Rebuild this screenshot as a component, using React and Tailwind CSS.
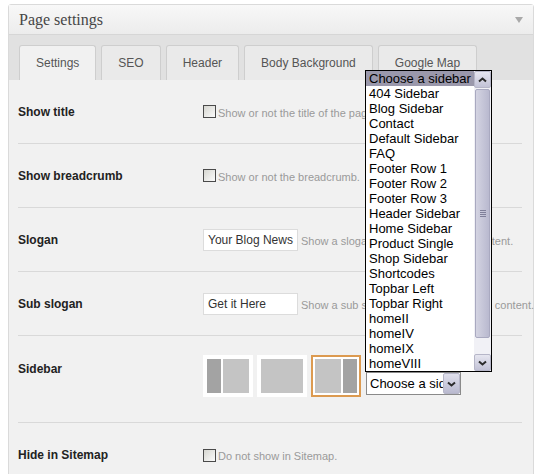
import React from 'react';

const sidebars = [
  'Choose a sidebar', '404 Sidebar', 'Blog Sidebar', 'Contact', 'Default Sidebar', 'FAQ',
  'Footer Row 1', 'Footer Row 2', 'Footer Row 3', 'Header Sidebar', 'Home Sidebar',
  'Product Single', 'Shop Sidebar', 'Shortcodes', 'Topbar Left', 'Topbar Right',
  'homeII', 'homeIV', 'homeIX', 'homeVIII',
];

const tabs = ['Settings', 'SEO', 'Header', 'Body Background', 'Google Map'];

function Chevron({ down }) {
  return (
    <svg width="9" height="6" viewBox="0 0 9 6">
      <path d={down ? 'M1 1.5 L4.5 4.5 L8 1.5' : 'M1 4.5 L4.5 1.5 L8 4.5'} fill="none" stroke="#2b2b2b" strokeWidth="2" />
    </svg>
  );
}

function ScrollButton({ down }) {
  return (
    <div className="h-[17px] w-full flex items-center justify-center rounded-[2px] border border-[#b6b6c8] bg-gradient-to-b from-[#e6e6f0] to-[#c2c2d6]">
      <Chevron down={down} />
    </div>
  );
}

function Checkbox() {
  return <div className="w-[13px] h-[13px] shrink-0 border border-[#4a4a4a] bg-gradient-to-br from-[#d6d6d0] to-[#fbfbfb]" />;
}

function Row({ label, children, last }) {
  return (
    <div className={`flex items-center h-[64px] ${last ? '' : 'border-b border-[#d9d9d9]'}`}>
      <div className="w-[185px] shrink-0 text-[12px] font-bold text-[#222]">{label}</div>
      <div className="flex items-center">{children}</div>
    </div>
  );
}

function Desc({ children }) {
  return <span className="text-[11px] text-[#9a9a9a] whitespace-nowrap">{children}</span>;
}

function TextInput({ value }) {
  return (
    <div className="w-[95px] h-[22px] shrink-0 border border-[#dcdcdc] bg-white px-[4px] flex items-center text-[12px] text-[#333] whitespace-nowrap overflow-hidden">
      {value}
    </div>
  );
}

function SidebarSelect() {
  return (
    <div className="relative ml-[1px] mb-[2px]">
      <div className="absolute bottom-full left-[-1px] z-10 w-[127px] h-[302px] border border-black bg-white flex">
        <ul className="flex-1 overflow-hidden text-[13px] leading-[15px] text-black">
          {sidebars.map((s, i) => (
            <li key={s} className={`pl-[3px] whitespace-nowrap ${i === 0 ? 'bg-[#9a98ab]' : ''}`}>{s}</li>
          ))}
        </ul>
        <div className="w-[17px] flex flex-col bg-[#f1f1f6]">
          <ScrollButton />
          <div className="flex-1 px-[1px] pt-[1px]">
            <div className="h-[249px] rounded-[2px] border border-[#a9a9c0] bg-gradient-to-r from-[#d4d4e2] to-[#b9b9cf] flex items-center justify-center">
              <div className="flex flex-col gap-[1px]">
                <div className="w-[6px] h-px bg-[#7f7f99]" />
                <div className="w-[6px] h-px bg-[#7f7f99]" />
                <div className="w-[6px] h-px bg-[#7f7f99]" />
                <div className="w-[6px] h-px bg-[#7f7f99]" />
              </div>
            </div>
          </div>
          <ScrollButton down />
        </div>
      </div>
      <div className="w-[95px] h-[23px] border border-[#8a8a8a] bg-white flex items-center">
        <span className="flex-1 overflow-hidden whitespace-nowrap pl-[3px] text-[13px] text-black">Choose a sidebar</span>
        <div className="w-[17px] h-[21px] flex items-center justify-center rounded-[2px] border border-[#b6b6c8] bg-gradient-to-b from-[#e0e0ec] to-[#b9b9cf]">
          <Chevron down />
        </div>
      </div>
    </div>
  );
}

export default function App() {
  return (
    <div className="min-h-screen bg-white pt-[4px] pl-[8px] font-['Liberation_Sans',Arial,sans-serif]">
      <div className="w-[526px] border border-[#dadada] rounded-t-[3px]">
        <div className="h-[30px] flex items-center justify-between pl-[10px] pr-[10px] border-b border-[#d6d6d6] bg-gradient-to-b from-[#f8f8f8] to-[#ececec]">
          <span className="font-['Liberation_Serif',serif] text-[16px] text-[#464646]">Page settings</span>
          <svg width="8" height="6" viewBox="0 0 8 6"><path d="M0 0 H8 L4 6 Z" fill="#a9a9a9" /></svg>
        </div>
        <div className="h-[45px] flex items-end gap-[5px] pl-[10px] bg-[#e1e1e1]">
          {tabs.map((t, i) => (
            <div
              key={t}
              className={`h-[35px] px-[16px] flex items-center border border-b-0 border-[#cecece] rounded-t-[3px] text-[12px] text-[#555] whitespace-nowrap ${i === 0 ? 'bg-[#f1f1f1]' : 'bg-[#eaeaea]'}`}
            >
              {t}
            </div>
          ))}
        </div>
        <div className="bg-[#f1f1f1] pl-[9px] pr-[11px]">
          <Row label="Show title">
            <Checkbox />
            <span className="ml-[2px]"><Desc>Show or not the title of the page.</Desc></span>
          </Row>
          <Row label="Show breadcrumb">
            <Checkbox />
            <span className="ml-[2px]"><Desc>Show or not the breadcrumb.</Desc></span>
          </Row>
          <Row label="Slogan">
            <TextInput value="Your Blog News" />
            <span className="ml-[3px]"><Desc>Show a slogan in the header of the content.</Desc></span>
          </Row>
          <Row label="Sub slogan">
            <TextInput value="Get it Here" />
            <span className="ml-[3px]"><Desc>Show a sub slogan in the header of the content.</Desc></span>
          </Row>
          <div className="flex items-start pt-[19px] pb-[25px] border-b border-[#d9d9d9]">
            <div className="w-[185px] shrink-0 mt-[5px] text-[12px] font-bold text-[#222]">Sidebar</div>
            <div className="flex items-end gap-[4px]">
              <div className="w-[50px] h-[42px] bg-white p-[4px] flex gap-[2px]">
                <div className="w-[14px] bg-[#a3a3a3]" />
                <div className="flex-1 bg-[#c4c4c4]" />
              </div>
              <div className="w-[50px] h-[42px] bg-white p-[4px] flex">
                <div className="flex-1 bg-[#c4c4c4]" />
              </div>
              <div className="w-[50px] h-[42px] bg-white border-2 border-[#dc9a50] p-[2px] flex gap-[2px]">
                <div className="flex-1 bg-[#c4c4c4]" />
                <div className="w-[14px] bg-[#a3a3a3]" />
              </div>
              <SidebarSelect />
            </div>
          </div>
          <Row label="Hide in Sitemap" last>
            <Checkbox />
            <span className="ml-[2px]"><Desc>Do not show in Sitemap.</Desc></span>
          </Row>
        </div>
      </div>
    </div>
  );
}
